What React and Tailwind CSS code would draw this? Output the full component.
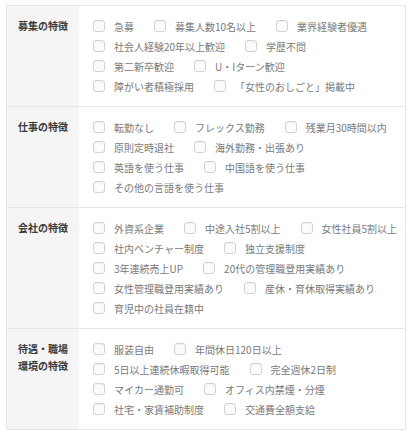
const SECTIONS = [
  {
    label: ['募集の特徴'],
    rows: [
      ['急募', '募集人数10名以上', '業界経験者優遇'],
      ['社会人経験20年以上歓迎', '学歴不問'],
      ['第二新卒歓迎', 'U・Iターン歓迎'],
      ['障がい者積極採用', '「女性のおしごと」掲載中'],
    ],
  },
  {
    label: ['仕事の特徴'],
    rows: [
      ['転勤なし', 'フレックス勤務', '残業月30時間以内'],
      ['原則定時退社', '海外勤務・出張あり'],
      ['英語を使う仕事', '中国語を使う仕事'],
      ['その他の言語を使う仕事'],
    ],
  },
  {
    label: ['会社の特徴'],
    rows: [
      ['外資系企業', '中途入社5割以上', '女性社員5割以上'],
      ['社内ベンチャー制度', '独立支援制度'],
      ['3年連続売上UP', '20代の管理職登用実績あり'],
      ['女性管理職登用実績あり', '産休・育休取得実績あり'],
      ['育児中の社員在籍中'],
    ],
  },
  {
    label: ['待遇・職場', '環境の特徴'],
    rows: [
      ['服装自由', '年間休日120日以上'],
      ['5日以上連続休暇取得可能', '完全週休2日制'],
      ['マイカー通勤可', 'オフィス内禁煙・分煙'],
      ['社宅・家賃補助制度', '交通費全額支給'],
    ],
  },
];

function Check({ text }) {
  return (
    <label className="flex items-center cursor-pointer">
      <span className="w-[12px] h-[12px] mr-[9px] rounded-[3px] border border-[#d2d2d2] bg-[#fbfbfb] shadow-[inset_0_1px_1px_rgba(0,0,0,0.04)] shrink-0" />
      <span className="whitespace-nowrap">{text}</span>
    </label>
  );
}

export default function App() {
  return (
    <div className="bg-white w-[412px] min-h-[436px] pt-[5px] pl-[6px]" style={{ fontFamily: '"Noto Sans CJK JP", "Noto Sans", sans-serif' }}>
      <div className="w-[400px] border border-[#e6e6e6]">
        {SECTIONS.map((s, i) => (
          <div key={i} className={`flex ${i > 0 ? 'border-t border-[#e6e6e6]' : ''}`}>
            <div className="w-[72px] shrink-0 bg-[#f5f5f5] pl-[11px] pt-[11px] text-[10px] leading-[17px] font-bold text-[#3a3a3a]">
              {s.label.map(l => <div key={l}>{l}</div>)}
            </div>
            <div className="flex-1 pl-[14px] py-[10px] text-[10px] text-[#7a7a7a]">
              {s.rows.map((row, j) => (
                <div key={j} className="flex items-center gap-x-[20px] h-[20px]">
                  {row.map(t => <Check key={t} text={t} />)}
                </div>
              ))}
            </div>
          </div>
        ))}
      </div>
    </div>
  );
}
